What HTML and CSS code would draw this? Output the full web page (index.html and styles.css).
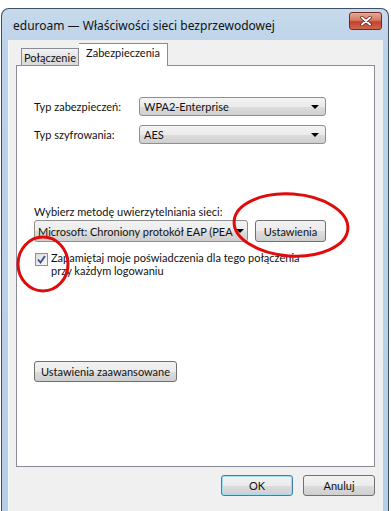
FILE: index.html
```html
<!DOCTYPE html>
<html>
<head>
  <title>eduroam — Właściwości sieci bezprzewodowej</title>
  <meta name="viewport" content="width=device-width, initial-scale=1" />
  <link rel="stylesheet" href="styles.css">
</head>
<body>
  <div class="window">
    <div class="titlebar">
      <span class="title">eduroam — Właściwości sieci bezprzewodowej</span>
      <span class="close">
        <svg width="14" height="10" viewBox="0 0 14 10">
          <path d="M3 1.5 L11 8.5 M11 1.5 L3 8.5" stroke="#5a1a10" stroke-width="3.4" stroke-linecap="round"/>
          <path d="M3 1.5 L11 8.5 M11 1.5 L3 8.5" stroke="#fff" stroke-width="2" stroke-linecap="round"/>
        </svg>
      </span>
    </div>

    <div class="client">
      <div class="tabs">
        <div class="tab">Połączenie</div>
        <div class="tab active">Zabezpieczenia</div>
      </div>

      <div class="panel">
        <div class="field">
          <span class="label">Typ zabezpieczeń:</span>
          <div class="combo"><span class="combo-text">WPA2-Enterprise</span><span class="arrow"></span></div>
        </div>
        <div class="field">
          <span class="label">Typ szyfrowania:</span>
          <div class="combo"><span class="combo-text">AES</span><span class="arrow"></span></div>
        </div>

        <div class="method-label">Wybierz metodę uwierzytelniania sieci:</div>
        <div class="method-row">
          <div class="combo wide"><span class="combo-text">Microsoft: Chroniony protokół EAP (PEAP)</span><span class="arrow"></span></div>
          <button class="btn settings">Ustawienia</button>
        </div>

        <div class="check-row">
          <span class="checkbox">
            <svg width="9" height="9" viewBox="0 0 9 9">
              <path d="M1 4.5 L3.5 7.5 L8 1" fill="none" stroke="#3a4f8c" stroke-width="1.8"/>
            </svg>
          </span>
          <span class="check-text">Zapamiętaj moje poświadczenia dla tego połączenia<br>przy każdym logowaniu</span>
        </div>

        <button class="btn advanced">Ustawienia zaawansowane</button>
      </div>

      <div class="footer">
        <button class="btn ok">OK</button>
        <button class="btn">Anuluj</button>
      </div>
    </div>
  </div>

  <svg class="marks" width="391" height="511" viewBox="0 0 391 511">
    <ellipse cx="291" cy="225" rx="57" ry="31" transform="rotate(4 291 225)" fill="none" stroke="#e00b0b" stroke-width="3"/>
    <ellipse cx="43" cy="264" rx="25" ry="27" fill="none" stroke="#e00b0b" stroke-width="3"/>
  </svg>
</body>
</html>
```

FILE: styles.css
```css
body {
  margin: 0;
  background: #fff;
  font-family: Lato, "Noto Sans", sans-serif;
  font-size: 11px;
  color: #111;
  position: relative;
  width: 391px;
  height: 511px;
  overflow: hidden;
}

.window {
  margin: 8px 0 0 1px;
  width: 388px;
  height: 503px;
  box-sizing: border-box;
  border: 1px solid #3d4f62;
  border-bottom: none;
  border-radius: 8px 8px 0 0;
  background: linear-gradient(#c7daec, #bcd2e8 40px, #b7cfe6);
  display: flex;
  flex-direction: column;
}

.titlebar {
  height: 31px;
  flex: none;
  display: flex;
  align-items: center;
  padding: 0 6px 0 11px;
}

.title {
  flex: 1;
  font-family: "Noto Sans", sans-serif;
  font-size: 12px;
  margin-top: 2px;
}

.close {
  width: 31px;
  height: 16px;
  margin-top: -7px;
  border: 1px solid #6e2b22;
  border-radius: 3px;
  background: linear-gradient(#e8a99a, #d77865 45%, #c0432f 55%, #d0664f);
  display: flex;
  align-items: center;
  justify-content: center;
}

.client {
  flex: 1;
  margin: 0 5px 0 6px;
  background: #f0f0f0;
  border-left: 1px solid #f6f9fc;
  padding: 3px 0 0 7px;
  display: flex;
  flex-direction: column;
  position: relative;
}

.client::after {
  content: "";
  position: absolute;
  left: -7px;
  right: -6px;
  bottom: -8px;
  height: 8px;
  background: linear-gradient(#d4dff0 1px, #a8c5e2 2px);
}

.tabs {
  display: flex;
  align-items: flex-end;
  padding-left: 5px;
  height: 22px;
  position: relative;
  z-index: 1;
}

.tab {
  width: 58px;
  height: 17px;
  box-sizing: border-box;
  border: 1px solid #898c95;
  border-bottom: none;
  background: linear-gradient(#f2f2f2, #e3e3e3 50%, #d9d9d9);
  line-height: 17px;
  text-align: center;
}

.tab.active {
  width: 89px;
  height: 23px;
  margin-bottom: -1px;
  border-left: none;
  background: #fff;
  line-height: 17px;
}

.panel {
  width: 359px;
  height: 402px;
  box-sizing: border-box;
  border: 1px solid #898c95;
  background: #fff;
  padding: 31px 0 0 17px;
}

.field {
  display: flex;
  align-items: center;
  margin-bottom: 9px;
}

.label {
  width: 105px;
}

.combo {
  width: 187px;
  height: 19px;
  box-sizing: border-box;
  border: 1px solid #8e8f8f;
  border-radius: 3px;
  background: linear-gradient(#f3f3f3, #ebebeb 50%, #dddddd 51%, #cfcfcf);
  display: flex;
  align-items: center;
  padding: 0 6px 0 4px;
}

.combo-text {
  flex: 1;
  white-space: nowrap;
  overflow: hidden;
}

.arrow {
  flex: none;
  width: 0;
  height: 0;
  margin-left: 4px;
  border-left: 4px solid transparent;
  border-right: 4px solid transparent;
  border-top: 4px solid #000;
}

.method-label {
  margin-top: 60px;
  line-height: 15px;
}

.method-row {
  display: flex;
  align-items: center;
  gap: 7px;
  margin-top: 1px;
}

.combo.wide {
  width: 214px;
  height: 22px;
  padding: 0 3px;
}

.combo.wide .arrow {
  margin-left: 3px;
}

.btn {
  font-family: inherit;
  font-size: inherit;
  color: #111;
  height: 21px;
  box-sizing: border-box;
  border: 1px solid #707070;
  border-radius: 3px;
  background: linear-gradient(#f2f2f2, #ebebeb 50%, #dddddd 51%, #cfcfcf);
  padding: 0 4px;
  white-space: nowrap;
}

.settings {
  width: 71px;
  height: 22px;
}

.check-row {
  display: flex;
  align-items: flex-start;
  margin-top: 9px;
  padding-left: 1px;
}

.checkbox {
  width: 13px;
  height: 13px;
  box-sizing: border-box;
  border: 1px solid #8e8f8f;
  background: linear-gradient(135deg, #dcdcdc, #fafafa);
  display: flex;
  align-items: center;
  justify-content: center;
  margin-top: 2px;
}

.check-text {
  margin-left: 3px;
  line-height: 13px;
}

.advanced {
  display: block;
  width: 143px;
  margin-top: 84px;
}

.footer {
  display: flex;
  justify-content: flex-end;
  gap: 10px;
  padding: 8px 8px 0 0;
}

.footer .btn {
  width: 72px;
}

.ok {
  border-color: #3c7fb1;
  box-shadow: inset 0 0 0 1px #9fdcf4;
}

.marks {
  position: absolute;
  left: 0;
  top: 0;
  pointer-events: none;
}
```
